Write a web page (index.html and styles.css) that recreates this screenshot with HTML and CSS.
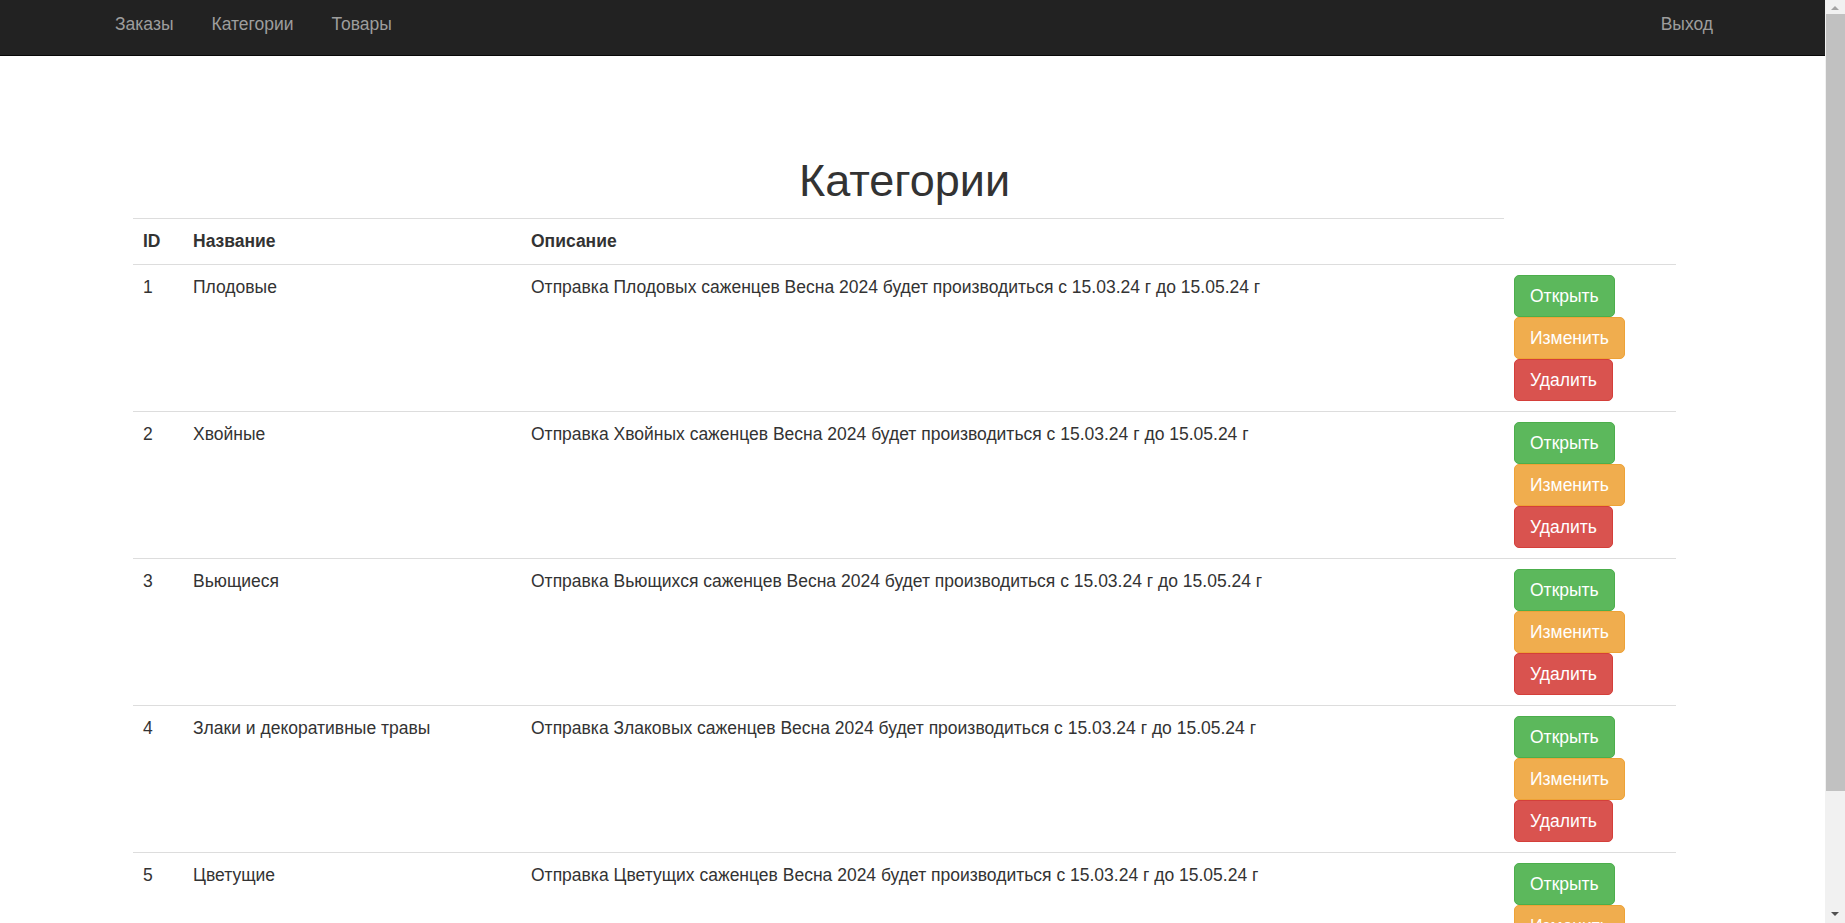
FILE: index.html
```html
<!DOCTYPE html>
<html lang="ru">
<head>
<meta charset="utf-8">
<title>Категории</title>
<link rel="stylesheet" href="styles.css">
</head>
<body>
<div class="page">
  <div class="main">
    <nav class="navbar">
      <ul class="nav nav-left">
        <li><a href="#">Заказы</a></li>
        <li><a href="#">Категории</a></li>
        <li><a href="#">Товары</a></li>
      </ul>
      <ul class="nav nav-right">
        <li><a href="#">Выход</a></li>
      </ul>
    </nav>
    <div class="container">
      <h1 class="title">Категории</h1>
      <table class="table">
        <colgroup>
          <col class="c-id">
          <col class="c-name">
          <col class="c-desc">
          <col class="c-act">
        </colgroup>
        <thead>
          <tr><th>ID</th><th>Название</th><th>Описание</th></tr>
        </thead>
        <tbody>
          <tr>
            <td>1</td><td>Плодовые</td>
            <td>Отправка Плодовых саженцев Весна 2024 будет производиться с 15.03.24 г до 15.05.24 г</td>
            <td><div class="actions"><a class="btn btn-success" href="#">Открыть</a><a class="btn btn-warning" href="#">Изменить</a><a class="btn btn-danger" href="#">Удалить</a></div></td>
          </tr>
          <tr>
            <td>2</td><td>Хвойные</td>
            <td>Отправка Хвойных саженцев Весна 2024 будет производиться с 15.03.24 г до 15.05.24 г</td>
            <td><div class="actions"><a class="btn btn-success" href="#">Открыть</a><a class="btn btn-warning" href="#">Изменить</a><a class="btn btn-danger" href="#">Удалить</a></div></td>
          </tr>
          <tr>
            <td>3</td><td>Вьющиеся</td>
            <td>Отправка Вьющихся саженцев Весна 2024 будет производиться с 15.03.24 г до 15.05.24 г</td>
            <td><div class="actions"><a class="btn btn-success" href="#">Открыть</a><a class="btn btn-warning" href="#">Изменить</a><a class="btn btn-danger" href="#">Удалить</a></div></td>
          </tr>
          <tr>
            <td>4</td><td>Злаки и декоративные травы</td>
            <td>Отправка Злаковых саженцев Весна 2024 будет производиться с 15.03.24 г до 15.05.24 г</td>
            <td><div class="actions"><a class="btn btn-success" href="#">Открыть</a><a class="btn btn-warning" href="#">Изменить</a><a class="btn btn-danger" href="#">Удалить</a></div></td>
          </tr>
          <tr>
            <td>5</td><td>Цветущие</td>
            <td>Отправка Цветущих саженцев Весна 2024 будет производиться с 15.03.24 г до 15.05.24 г</td>
            <td><div class="actions"><a class="btn btn-success" href="#">Открыть</a><a class="btn btn-warning" href="#">Изменить</a><a class="btn btn-danger" href="#">Удалить</a></div></td>
          </tr>
        </tbody>
      </table>
    </div>
  </div>
  <div class="scrollbar">
    <div class="sb-btn sb-up"><span class="arrow-up"></span></div>
    <div class="sb-thumb"></div>
    <div class="sb-track"></div>
    <div class="sb-btn sb-down"><span class="arrow-down"></span></div>
  </div>
</div>
</body>
</html>
```
FILE: styles.css
```css
* { box-sizing: border-box; }
html, body {
  margin: 0;
  padding: 0;
  height: 923px;
  overflow: hidden;
}
body {
  font-family: "Liberation Sans", Arial, sans-serif;
  font-size: 17.5px;
  line-height: 25px;
  color: #333;
  background: #fff;
}
.page {
  display: flex;
  height: 923px;
  overflow: hidden;
}
.main {
  width: 1825px;
  flex: none;
  overflow: hidden;
}
a { text-decoration: none; }

/* navbar */
.navbar {
  height: 56px;
  background: #222;
  border-bottom: 1px solid #080808;
  display: flex;
  justify-content: space-between;
  align-items: flex-start;
}
.nav {
  list-style: none;
  margin: 0;
  padding: 0;
  display: flex;
}
.nav-left { margin-left: 96px; }
.nav-right { margin-right: 93px; }
.nav a {
  display: block;
  color: #9d9d9d;
  padding: 12px 19px 18px;
  line-height: 25px;
}

/* content */
.container {
  margin-left: 133px;
  width: 1543px;
}
.title {
  margin: 101px 0 13px;
  font-size: 45px;
  line-height: 48px;
  font-weight: 500;
  text-align: center;
  color: #333;
}
.table {
  width: 1543px;
  border-collapse: collapse;
  table-layout: fixed;
}
.c-id { width: 50px; }
.c-name { width: 338px; }
.c-desc { width: 983px; }
.c-act { width: 172px; }
.table th {
  text-align: left;
  font-weight: bold;
  padding: 10px;
  border-top: 1px solid #ddd;
  vertical-align: bottom;
}
.table td {
  padding: 10px;
  border-top: 1px solid #ddd;
  vertical-align: top;
}
.actions {
  display: flex;
  flex-direction: column;
  align-items: flex-start;
}
.btn {
  display: inline-block;
  padding: 7.5px 15px;
  font-size: 17.5px;
  line-height: 25px;
  border: 1px solid transparent;
  border-radius: 5px;
  color: #fff;
  white-space: nowrap;
}
.btn-success { background: #5cb85c; border-color: #4cae4c; }
.btn-warning { background: #f0ad4e; border-color: #eea236; }
.btn-danger { background: #d9534f; border-color: #d43f3a; }

/* fake scrollbar */
.scrollbar {
  width: 20px;
  flex: none;
  background: #f1f1f1;
  display: flex;
  flex-direction: column;
}
.sb-btn {
  display: flex;
  justify-content: center;
  align-items: center;
}
.sb-up { height: 14px; padding-top: 1px; }
.sb-down { height: 17px; padding-bottom: 2px; }
.sb-thumb {
  height: 777px;
  margin-left: 1px;
  background: #c1c1c1;
}
.sb-track { flex: 1; }
.arrow-up {
  width: 0; height: 0;
  border-left: 4px solid transparent;
  border-right: 4px solid transparent;
  border-bottom: 4px solid #a3a3a3;
}
.arrow-down {
  width: 0; height: 0;
  border-left: 4px solid transparent;
  border-right: 4px solid transparent;
  border-top: 4px solid #505050;
}
```
